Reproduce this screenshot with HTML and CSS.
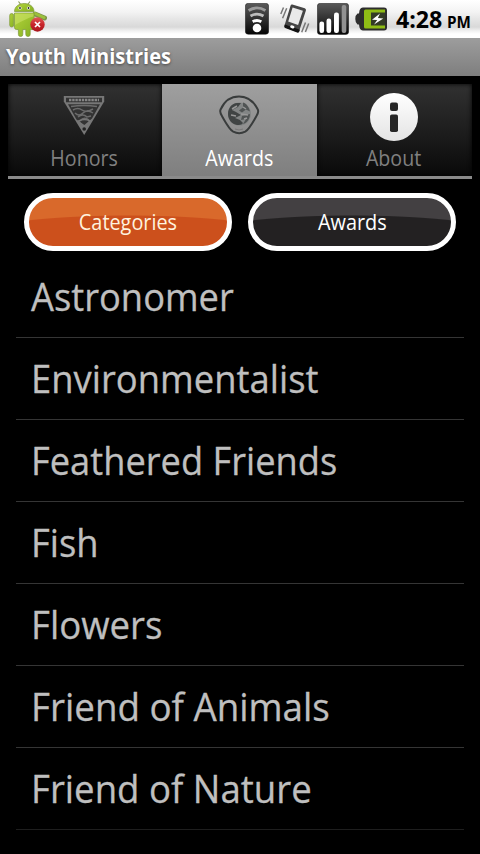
FILE: index.html
```
<!DOCTYPE html>
<html lang="en">
<head>
<meta charset="utf-8">
<title>Youth Ministries</title>
<link rel="stylesheet" href="styles.css">
</head>
<body>
<header class="status">
  <svg class="robot" width="40" height="38" viewBox="0 0 40 38">
    <defs>
      <linearGradient id="green" x1="0" y1="0" x2="1" y2="1"><stop offset="0" stop-color="#b4d43c"/><stop offset="1" stop-color="#83ae20"/></linearGradient>
      <linearGradient id="red" x1="0" y1="0" x2="0" y2="1"><stop offset="0" stop-color="#e05a55"/><stop offset=".5" stop-color="#c8252b"/><stop offset="1" stop-color="#a8151c"/></linearGradient>
    </defs>
    <path d="M10.500 1.500l3 4M22 1.500l-3 4" stroke="#8a9a50" stroke-width="1.100"/>
    <path d="M27 14l9.500 4" stroke="#7c9548" stroke-width="5" stroke-linecap="round"/>
    <path d="M27 13.500l9 4" stroke="#9cc03c" stroke-width="3" stroke-linecap="round"/>
    <g fill="url(#green)" stroke="#7c9838" stroke-width=".7">
      <path d="M6.500 11.500C6.500 6.500 11 3.500 16.200 3.500S26 6.500 26 11.500z"/>
      <rect x="1.700" y="13.500" width="4" height="13.500" rx="2"/>
      <path d="M6.500 13h19.700v14.500q0 2-2 2h-2v5q0 2-2.200 2t-2.200-2v-5h-3v5q0 2-2.200 2t-2.200-2v-5H8.500q-2 0-2-2z"/>
    </g>
    <path d="M7 13.500h18.500v3Q19 18 7 25z" fill="#d0e56c" opacity=".55"/>
    <g fill="#fff"><circle cx="12" cy="8" r="1.600"/><circle cx="20.500" cy="8" r="1.600"/></g>
    <g fill="#222"><circle cx="12" cy="8" r=".9"/><circle cx="20.500" cy="8" r=".9"/></g>
    <circle cx="29.500" cy="24.500" r="7.200" fill="url(#red)"/>
    <path d="M27 22l5 5M32 22l-5 5" stroke="#fff" stroke-width="1.700"/>
  </svg>
  <svg class="wifi" width="24" height="32" viewBox="0 0 24 32">
    <defs><linearGradient id="dark" x1="0" y1="0" x2="0" y2="1"><stop offset="0" stop-color="#5a5a5a"/><stop offset=".5" stop-color="#303030"/><stop offset="1" stop-color="#050505"/></linearGradient></defs>
    <rect x=".3" y=".3" width="23.400" height="31" rx="3" fill="url(#dark)" stroke="#222" stroke-width=".5"/>
    <circle cx="12" cy="25" r="4.300" fill="#fff"/>
    <path d="M7.700 18.800q4.300-2.600 8.600 0" fill="none" stroke="#fff" stroke-width="2.900"/>
    <path d="M5.500 13q6.500-3.800 13 0" fill="none" stroke="#bdbdbd" stroke-width="2.900"/>
    <path d="M3.600 7.500q8.400-5.200 16.800 0" fill="none" stroke="#9b9b9b" stroke-width="2.900"/>
  </svg>
  <svg class="vibrate" width="30" height="32" viewBox="0 0 30 32">
    <path d="M12.300 1.500L24.800 5.300Q26.400 6 25.900 7.500L19.200 28Q18.500 29.500 17 29L5.400 24.600Q4 24 4.500 22.500L10.500 2.700Q11 1.200 12.300 1.500z" fill="#454545"/>
    <path d="M12.600 4.500l10.300 3.200-4.800 14.200-9.900-3.500z" fill="#e9e9e9"/>
    <path d="M4.900 21.500l15 5.300-.8 2.200q-.7 1-2 .5L5.200 25q-1.300-.7-.8-2z" fill="#111"/>
    <ellipse cx="12.300" cy="23.900" rx="2.200" ry="1.500" fill="#fff" transform="rotate(18 12.300 23.900)"/>
    <path d="M3.500 4.500L.8 11M6.700 5.200L2.600 15.300M25.500 19.500l-3.800 9.800M28.700 20.500l-3.300 8.500" stroke="#777" stroke-width="1.500"/>
  </svg>
  <svg class="signal" width="32" height="32" viewBox="0 0 32 32">
    <rect x=".3" y=".3" width="31.400" height="31.200" rx="3" fill="url(#dark)" stroke="#222" stroke-width=".5"/>
    <g fill="#fff"><rect x="2.400" y="18.500" width="4.700" height="11.500" rx="2.200"/><rect x="9.500" y="15.500" width="4.700" height="14.500" rx="2.200"/><rect x="17" y="9.500" width="4.900" height="20.500" rx="2.200"/></g>
    <rect x="24.700" y="2" width="4.600" height="28" rx="2" fill="#929292"/>
  </svg>
  <svg class="battery" width="33" height="24" viewBox="0 0 33 24">
    <path d="M8 .5h21q3 0 3 3v17q0 3-3 3H8q-2.500 0-3.500-3l-.5-3H2.500Q.3 16 .3 12t2.200-5.500H4l.5-3Q5.500.5 8 .5z" fill="#2d2d2d"/>
    <path d="M10.500 2.500H30v3.200H16v12.600H30v3.200H10.500Q9 21.500 9 20V4q0-1.500 1.500-1.500z" fill="#8fbd15"/>
    <path d="M16 5.700H30v12.600H16z" fill="#343c25"/>
    <path d="M25 6.500l-8 6.300 5.200.2-3.200 4.500 9.300-6.100-5.400-.4z" fill="#fff"/>
  </svg>
  <div class="clock"><span class="time">4:28</span><span class="ampm">PM</span></div>
</header>
<div class="titlebar"><span>Youth Ministries</span></div>
<nav class="tabs">
  <div class="tab">
    <svg width="48" height="48" viewBox="0 0 48 48">
      <path d="M3.800 2.900h40.400v5.500L24.200 42 3.800 8.400z" fill="#777"/>
      <path d="M6 4.700h36v4.500H6zM8 11.200h32L32 25.500l-7.600 6.400-8-5.500z" fill="#333"/>
      <path d="M9 7h30" stroke="#858585" stroke-width="2.600" stroke-dasharray="2.400 .8"/>
      <path d="M11 13.500q13-2 26 0M13 17q5-3 9 0t11-1M15 20q4 4 8 0t10 0M18 24q5-4 9 0l4-1M20 28q4-5 9-1" fill="none" stroke="#6c6c6c" stroke-width="1.500"/>
      <path d="M18.500 28q6-3 11.500 0L24.300 37z" fill="none" stroke="#777" stroke-width="1.500"/>
      <circle cx="24.200" cy="36" r="1.800" fill="#222"/>
    </svg>
    <span class="label">Honors</span>
  </div>
  <div class="tab selected">
    <svg width="48" height="48" viewBox="0 0 48 48">
      <path d="M24 3.500c9 0 15 5.500 18.700 12.800 1.400 2.600.3 4.500-1.500 7.200-3.200 5.500-7 13-11 15.200-3.500 1.700-8.500 1.700-12 0-4-2.200-7.800-9.700-11-15.200-1.800-2.700-2.900-4.600-1.500-7.200C9 9 15 3.500 24 3.500z" fill="none" stroke="#393c3c" stroke-width="2"/>
      <circle cx="24.500" cy="21" r="11.500" fill="#828585"/>
      <path d="M22 10c-5 0-9 5-9 11s4 10 9 11c2 0 5 0 6-2l-3-3-5-2 6-3-5-3-4-2 6-3 3-4z" fill="#404444"/>
      <path d="M28 9.500c4 1 6 5 7 9l-4-2-4 3-3-2 4-3zM27 23l8-2c0 5-3 9-7 10l3-5-5 1z" fill="#505454"/>
      <path d="M17 16l5-3M16 22l5 1M28 14l3 2M26 21l7 1M29 26l3-1" stroke="#999" stroke-width="1.500"/>
      <path d="M20 36q4 2 8 0" fill="none" stroke="#777" stroke-width="1"/>
    </svg>
    <span class="label">Awards</span>
  </div>
  <div class="tab">
    <svg width="48" height="48" viewBox="0 0 48 48">
      <defs><linearGradient id="disc" x1="0" y1="0" x2="0" y2="1"><stop offset="0" stop-color="#fff"/><stop offset="1" stop-color="#e4e4e4"/></linearGradient></defs>
      <circle cx="24" cy="24" r="24" fill="url(#disc)"/>
      <rect x="20" y="9.500" width="8" height="8.500" rx="2" fill="#262626"/>
      <rect x="20" y="21.500" width="8" height="17.500" rx="1.800" fill="#262626"/>
    </svg>
    <span class="label">About</span>
  </div>
</nav>
<div class="buttons">
  <div class="pill orange"><span>Categories</span></div>
  <div class="pill dark"><span>Awards</span></div>
</div>
<ul class="list">
  <li><span>Astronomer</span></li>
  <li><span>Environmentalist</span></li>
  <li><span>Feathered Friends</span></li>
  <li><span>Fish</span></li>
  <li><span>Flowers</span></li>
  <li><span>Friend of Animals</span></li>
  <li><span>Friend of Nature</span></li>
</ul>
</body>
</html>
```
FILE: styles.css
```
* { box-sizing: border-box; }
body {
  margin: 0;
  width: 480px;
  height: 854px;
  overflow: hidden;
  background: #000;
  font-family: "Open Sans", "Noto Sans", sans-serif;
  font-size: 21px;
}
svg { display: block; flex: none; }
span { display: inline-block; white-space: nowrap; }

.status {
  display: flex;
  align-items: flex-start;
  height: 38px;
  padding-left: 8px;
  background: linear-gradient(#fff 0, #f3f3f3 12px, #e4e4e4 20px, #d9d9d9 27px, #f2f2f2 31px, #fff 34px);
}
.wifi { margin: 3px 0 0 197px; }
.vibrate { margin: 3px 0 0 11px; }
.signal { margin: 3px 0 0 7px; }
.battery { margin: 7px 0 0 6px; }
.clock {
  display: flex;
  align-items: baseline;
  margin-left: 8px;
  line-height: 38px;
  color: #000;
}
.time {
  width: 50.5px;
  font-size: 24px;
  font-weight: 700;
  transform: scaleX(.965);
  transform-origin: left;
}
.ampm {
  font-size: 16px;
  font-weight: 700;
  transform: scaleX(.95);
  transform-origin: left;
}

.titlebar {
  height: 38px;
  padding-left: 6px;
  line-height: 36px;
  font-weight: 700;
  color: #fff;
  background: linear-gradient(#9d9d9d, #7e7e7e);
  text-shadow: 0 1px 3px #444;
}
.titlebar span { transform: scaleX(.953); transform-origin: left; }

.tabs {
  display: grid;
  grid-template-columns: 154px 155px 155px;
  height: 95px;
  margin: 8px 8px 0;
  border-bottom: 3px solid #8a8a8a;
}
.tab {
  display: flex;
  flex-direction: column;
  align-items: center;
  padding-top: 9px;
  color: #808080;
  background: linear-gradient(#313131, #1c1c1c 55%, #090909);
  box-shadow: inset 0 0 5px #000;
}
.tab svg { margin-right: 1.5px; }
.tab.selected {
  color: #fff;
  background: linear-gradient(#9f9f9f, #7f7f7f);
  box-shadow: none;
}
.label {
  margin-top: 5px;
  margin-right: 1px;
  line-height: 24px;
  transform: scaleX(.935);
}

.buttons {
  display: grid;
  grid-template-columns: 208px 208px;
  gap: 16px;
  margin: 14px 24px 0;
}
.pill {
  height: 58px;
  border: 5px solid #fff;
  border-radius: 29px;
  line-height: 48px;
  text-align: center;
  color: #fff;
}
.pill span { transform: scaleX(.945); }
.orange {
  color: #fff3df;
  background: radial-gradient(ellipse 190px 32px at 50% 49px, #cc501c 97%, #d9692b 100%);
}
.dark { background: radial-gradient(ellipse 190px 32px at 50% 49px, #232122 97%, #434042 100%); }

.list {
  list-style: none;
  margin: 5px 16px 0;
  padding: 0;
}
.list li {
  height: 82px;
  padding-left: 14.5px;
  border-bottom: 1px solid #353535;
  font-size: 37.5px;
  line-height: 82px;
  color: #bfbfbf;
  -webkit-text-stroke: .3px #bfbfbf;
}
.list li:last-child { border-color: #1e1e1e; }
.list span { transform: scaleX(.976); transform-origin: left; }
.list li:nth-child(1) span { transform: scaleX(.968); }
.list li:nth-child(2) span { transform: scaleX(.971); }
.list li:nth-child(3) span { transform: scaleX(.967); }
.list li:nth-child(4) span { transform: scaleX(.97); }
.list li:nth-child(6) span { transform: scaleX(.98); }
```
